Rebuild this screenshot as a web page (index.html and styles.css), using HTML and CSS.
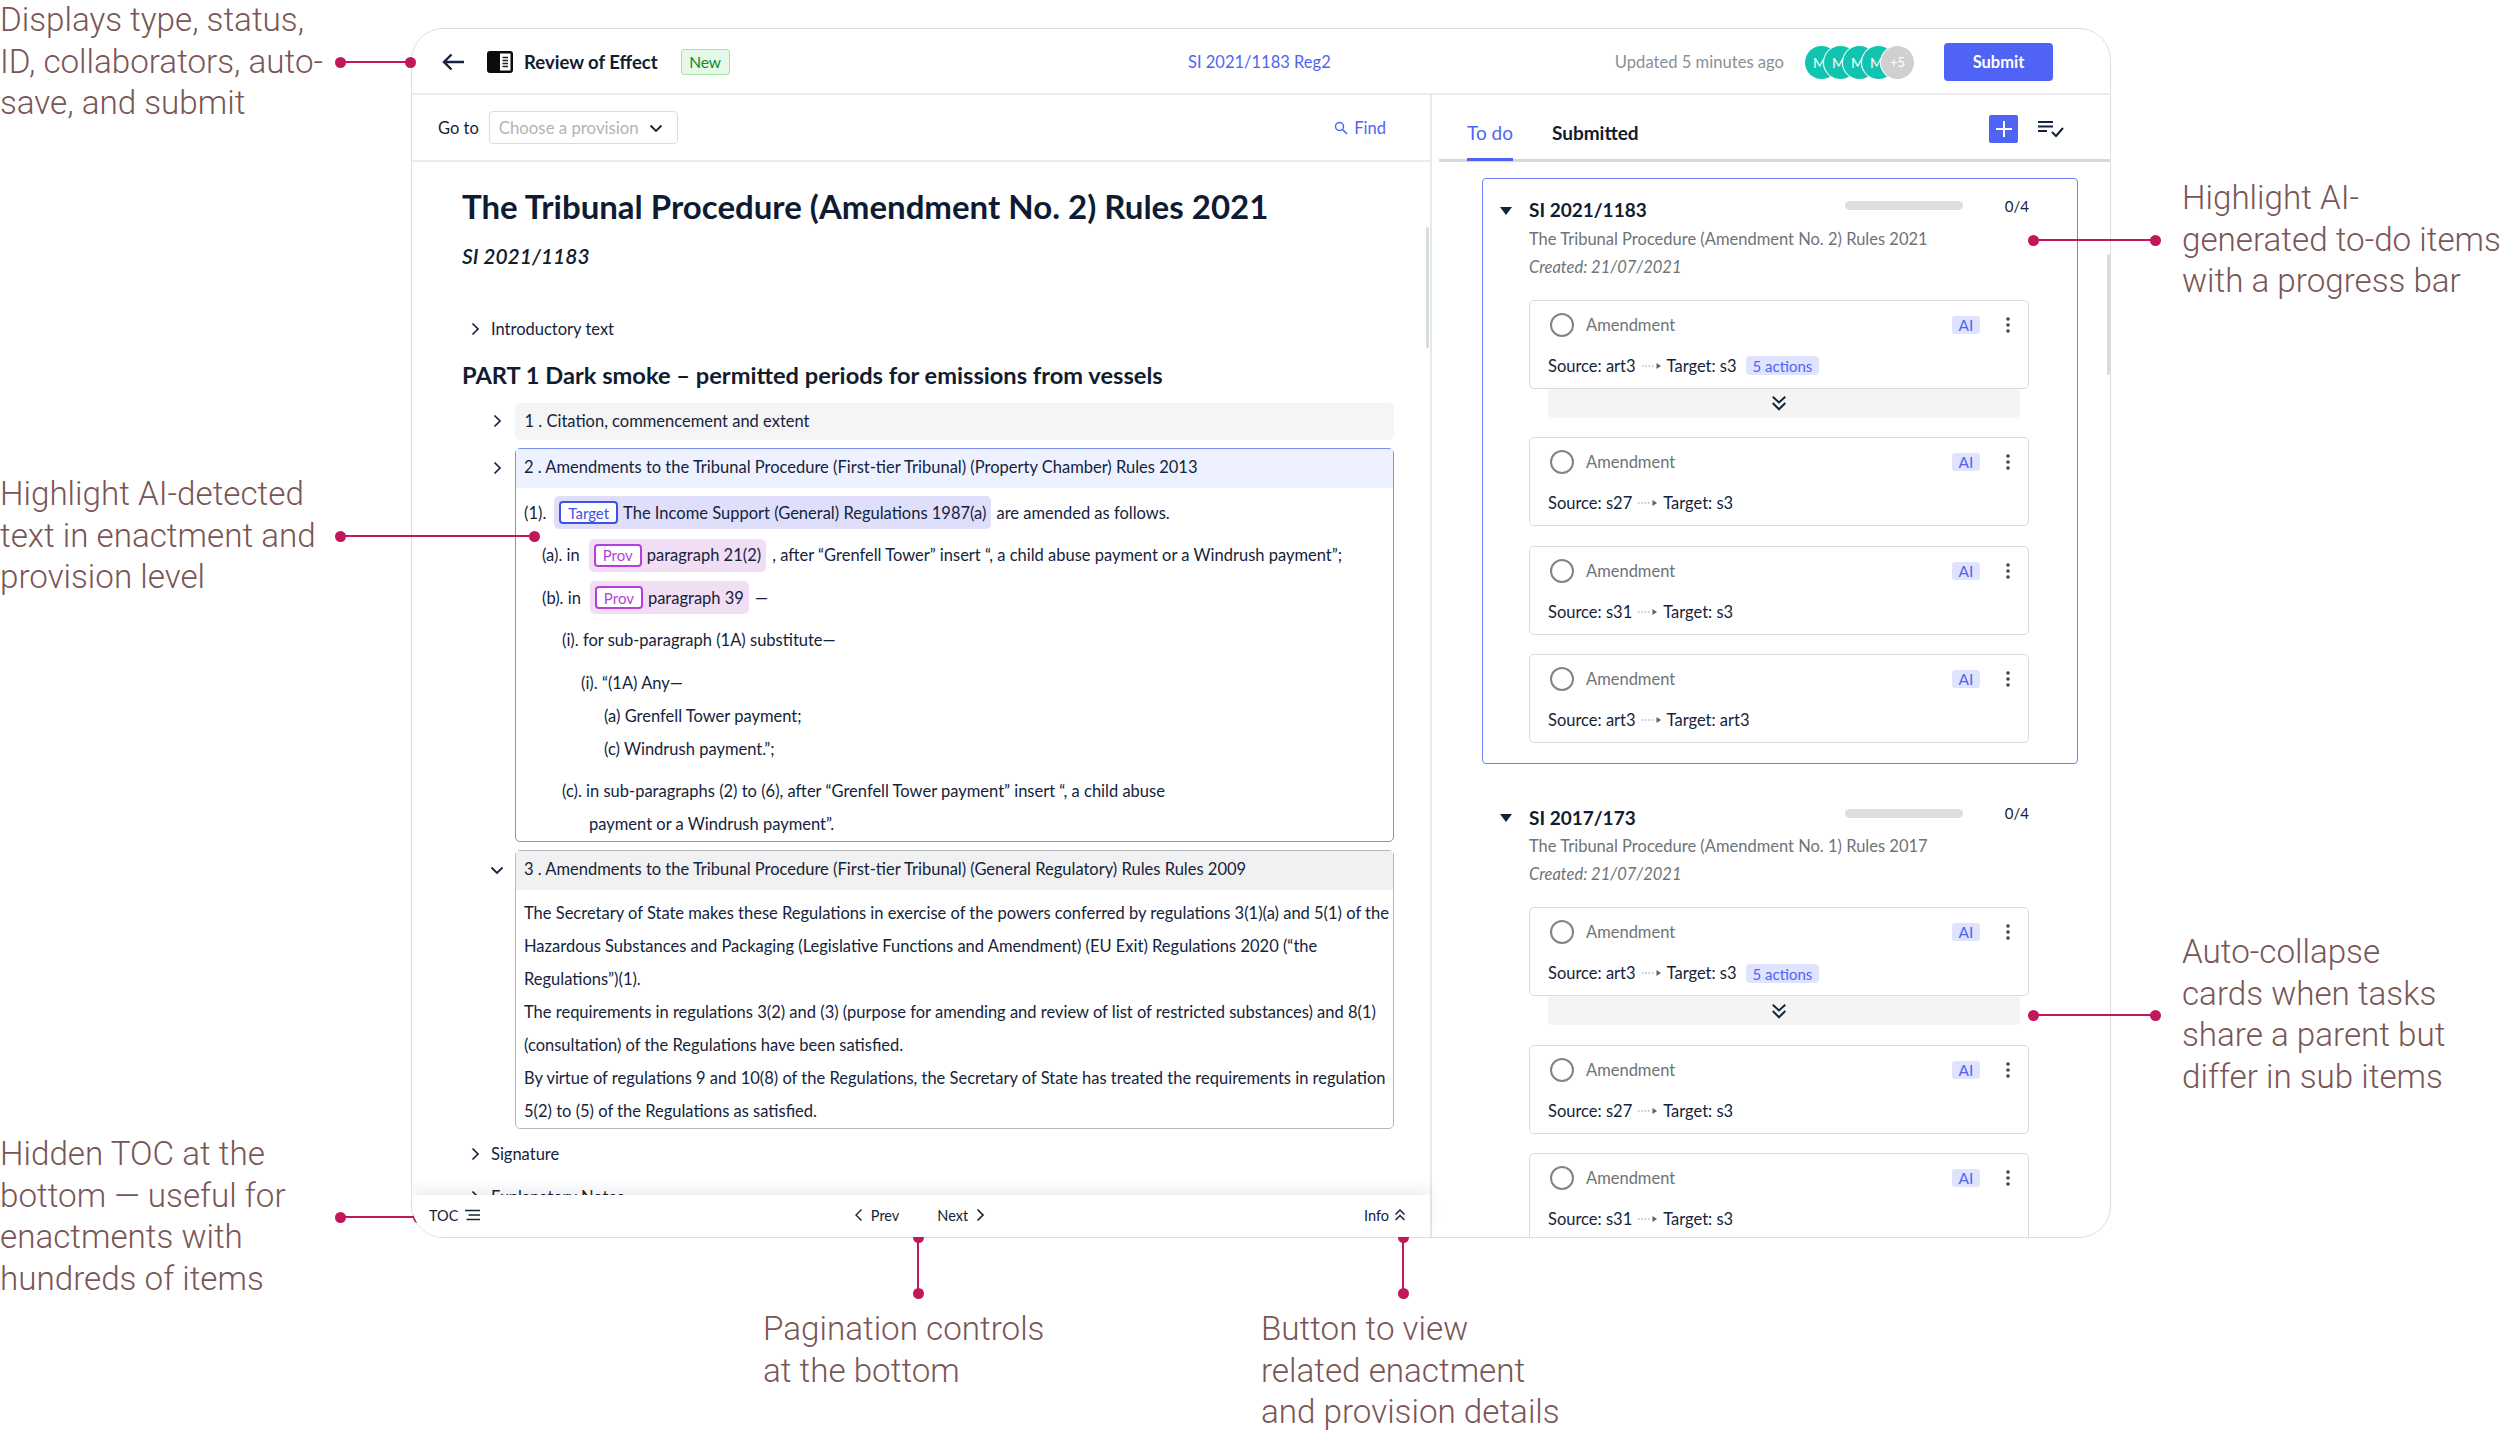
FILE: index.html
```html
<!DOCTYPE html>
<html lang="en">
<head>
  <meta charset="UTF-8" />
  <title>Review of Effect</title>
  <link rel="stylesheet" href="styles.css">
</head>
<body>
  <svg class="sprite" aria-hidden="true">
    <defs>
      <symbol id="chev-right" viewBox="0 0 10 14"><path d="M2.5 1.5 8 7l-5.5 5.5" fill="none" stroke="currentColor" stroke-width="1.7"/></symbol>
      <symbol id="chev-left" viewBox="0 0 10 14"><path d="M7.5 1.5 2 7l5.5 5.5" fill="none" stroke="currentColor" stroke-width="1.4"/></symbol>
      <symbol id="chev-down" viewBox="0 0 14 10"><path d="M1.5 2.5 7 8l5.5-5.5" fill="none" stroke="currentColor" stroke-width="1.8"/></symbol>
      <symbol id="double-down" viewBox="0 0 14 14"><path d="M1.5 1.5 7 6.5l5.5-5M1.5 7 7 12.5 12.5 7" fill="none" stroke="currentColor" stroke-width="1.7"/></symbol>
      <symbol id="double-up" viewBox="0 0 12 14"><path d="M1.5 6.5 6 2l4.500 4.500M1.500 12 6 7.500l4.500 4.500" fill="none" stroke="currentColor" stroke-width="1.500"/></symbol>
      <symbol id="more" viewBox="0 0 6 18"><circle cx="3" cy="3" r="1.800"/><circle cx="3" cy="9" r="1.800"/><circle cx="3" cy="15" r="1.800"/></symbol>
      <symbol id="flow-arrow" viewBox="0 0 22 10"><path d="M1 5h13" stroke="currentColor" stroke-width="1" stroke-dasharray="1.500 1.800" fill="none"/><path d="M15.500 2 20 5l-4.500 3z"/></symbol>
    </defs>
  </svg>

  <div class="canvas">
    <div class="app">
      <!-- Header -->
      <div class="header">
        <svg class="icon-back" viewBox="0 0 24 20"><path d="M23 10H3M10.500 2.500 3 10l7.500 7.500" fill="none" stroke="#14233c" stroke-width="2.400"/></svg>
        <svg class="icon-book" viewBox="0 0 26 22"><rect width="26" height="22" rx="3" fill="#0c0c0c"/><rect x="13" y="2.500" width="10.500" height="17" fill="#fff"/><path d="M15.500 6.500h5.500M15.500 9.500h5.500M15.500 12.500h5.500M15.500 15.500h5.500" stroke="#222" stroke-width="1.500"/></svg>
        <span class="doc-type">Review of Effect</span>
        <span class="badge-new">New</span>
        <a class="doc-id">SI 2021/1183 Reg2</a>
        <span class="updated">Updated 5 minutes ago</span>
        <div class="avatars">
          <span class="avatar">M</span>
          <span class="avatar">M</span>
          <span class="avatar">M</span>
          <span class="avatar">M</span>
          <span class="avatar more-people">+5</span>
        </div>
        <button class="submit">Submit</button>
      </div>

      <div class="panels">
        <!-- Document side -->
        <div class="doc-panel">
          <div class="toolbar">
            <span class="goto-label">Go to</span>
            <div class="goto-select">
              <span>Choose a provision</span>
              <svg class="select-chev"><use href="#chev-down"/></svg>
            </div>
            <a class="find">
              <svg class="icon-search" viewBox="0 0 14 14"><circle cx="5.500" cy="5.500" r="4" fill="none" stroke="#4f64f5" stroke-width="1.500"/><path d="m8.500 8.500 4.500 4.500" stroke="#4f64f5" stroke-width="1.600"/></svg>
              Find
            </a>
          </div>

          <div class="doc">
            <h1>The Tribunal Procedure (Amendment No. 2) Rules 2021</h1>
            <div class="doc-sub">SI 2021/1183</div>
            <div class="outline-row intro"><svg class="chev"><use href="#chev-right"/></svg>Introductory text</div>
            <h2>PART 1 Dark smoke – permitted periods for emissions from vessels</h2>

            <div class="section">
              <svg class="chev"><use href="#chev-right"/></svg>
              <div class="sec-box plain">1 . Citation, commencement and extent</div>
            </div>

            <div class="section">
              <svg class="chev chev-active"><use href="#chev-right"/></svg>
              <div class="sec-box selected">
                <div class="sec-title blue">2 . Amendments to the Tribunal Procedure (First-tier Tribunal) (Property Chamber) Rules 2013</div>
                <div class="prov-body">
                  <div class="line">(1).<span class="mark mark-target"><span class="tag tag-target">Target</span>The Income Support (General) Regulations 1987(a)</span>are amended as follows.</div>
                  <div class="line lvl-1 spaced">(a). in<span class="mark mark-prov"><span class="tag tag-prov">Prov</span>paragraph 21(2)</span>, after “Grenfell Tower” insert “, a child abuse payment or a Windrush payment”;</div>
                  <div class="line lvl-1 spaced">(b). in<span class="mark mark-prov"><span class="tag tag-prov">Prov</span>paragraph 39</span>—</div>
                  <div class="line lvl-2 spaced">(i). for sub-paragraph (1A) substitute—</div>
                  <div class="line lvl-3 spaced">(i). “(1A) Any—</div>
                  <div class="line lvl-4">(a) Grenfell Tower payment;</div>
                  <div class="line lvl-4">(c) Windrush payment.”;</div>
                  <div class="line lvl-2 spaced">(c). in sub-paragraphs (2) to (6), after “Grenfell Tower payment” insert “, a child abuse</div>
                  <div class="line lvl-5">payment or a Windrush payment”.</div>
                </div>
              </div>
            </div>

            <div class="section">
              <svg class="chev chev-open"><use href="#chev-down"/></svg>
              <div class="sec-box opened">
                <div class="sec-title grey">3 . Amendments to the Tribunal Procedure (First-tier Tribunal) (General Regulatory) Rules Rules 2009</div>
                <div class="sec-text">
                  The Secretary of State makes these Regulations in exercise of the powers conferred by regulations 3(1)(a) and 5(1) of the<br>
                  Hazardous Substances and Packaging (Legislative Functions and Amendment) (EU Exit) Regulations 2020 (“the<br>
                  Regulations”)(1).<br>
                  The requirements in regulations 3(2) and (3) (purpose for amending and review of list of restricted substances) and 8(1)<br>
                  (consultation) of the Regulations have been satisfied.<br>
                  By virtue of regulations 9 and 10(8) of the Regulations, the Secretary of State has treated the requirements in regulation<br>
                  5(2) to (5) of the Regulations as satisfied.
                </div>
              </div>
            </div>

            <div class="outline-row signature"><svg class="chev"><use href="#chev-right"/></svg>Signature</div>
            <div class="outline-row notes"><svg class="chev"><use href="#chev-right"/></svg>Explanatory Notes</div>
          </div>

          <!-- Bottom bar -->
          <div class="bottom-bar">
            <div class="toc">TOC
              <svg class="icon-toc" viewBox="0 0 16 12"><path d="M0 1.500h15M3.500 6h11.500M1.500 10.500h13.500" stroke="#14233c" stroke-width="1.700" fill="none"/></svg>
            </div>
            <div class="pager">
              <span class="pager-item"><svg class="pager-chev"><use href="#chev-left"/></svg>Prev</span>
              <span class="pager-item">Next<svg class="pager-chev"><use href="#chev-right"/></svg></span>
            </div>
            <div class="info">Info <svg class="icon-up"><use href="#double-up"/></svg></div>
          </div>
          <div class="scroll-thumb doc-thumb"></div>
        </div>

        <!-- To do side -->
        <div class="todo-panel">
          <div class="tabs">
            <span class="tab active">To do</span>
            <span class="tab">Submitted</span>
            <div class="tab-actions">
              <span class="add-btn"><svg viewBox="0 0 18 18"><path d="M9 1v16M1 9h16" stroke="#fff" stroke-width="2"/></svg></span>
              <svg class="icon-listcheck" viewBox="0 0 26 18"><path d="M0 2h15M0 6.500h15M0 11h9" stroke="#14233c" stroke-width="2"/><path d="m14 12 4 4 7-8" fill="none" stroke="#14233c" stroke-width="2"/></svg>
            </div>
          </div>

          <div class="todo-list">
            <div class="group current">
              <div class="group-head">
                <svg class="caret" viewBox="0 0 12 8"><path d="M0 0h12L6 8z"/></svg>
                <span class="group-id">SI 2021/1183</span>
                <div class="progress"></div>
                <span class="count">0/4</span>
              </div>
              <div class="group-desc">The Tribunal Procedure (Amendment No. 2) Rules 2021</div>
              <div class="group-date">Created: 21/07/2021</div>

              <div class="card-stack">
                <div>
                  <div class="card">
                    <div class="card-top"><span class="radio"></span><span class="card-type">Amendment</span><span class="ai">AI</span><svg class="more"><use href="#more"/></svg></div>
                    <div class="card-flow">Source: art3<svg class="flow"><use href="#flow-arrow"/></svg>Target: s3<span class="actions">5 actions</span></div>
                  </div>
                  <div class="expander"><svg><use href="#double-down"/></svg></div>
                </div>
                <div class="card">
                  <div class="card-top"><span class="radio"></span><span class="card-type">Amendment</span><span class="ai">AI</span><svg class="more"><use href="#more"/></svg></div>
                  <div class="card-flow">Source: s27<svg class="flow"><use href="#flow-arrow"/></svg>Target: s3</div>
                </div>
                <div class="card">
                  <div class="card-top"><span class="radio"></span><span class="card-type">Amendment</span><span class="ai">AI</span><svg class="more"><use href="#more"/></svg></div>
                  <div class="card-flow">Source: s31<svg class="flow"><use href="#flow-arrow"/></svg>Target: s3</div>
                </div>
                <div class="card">
                  <div class="card-top"><span class="radio"></span><span class="card-type">Amendment</span><span class="ai">AI</span><svg class="more"><use href="#more"/></svg></div>
                  <div class="card-flow">Source: art3<svg class="flow"><use href="#flow-arrow"/></svg>Target: art3</div>
                </div>
              </div>
            </div>

            <div class="group">
              <div class="group-head">
                <svg class="caret" viewBox="0 0 12 8"><path d="M0 0h12L6 8z"/></svg>
                <span class="group-id">SI 2017/173</span>
                <div class="progress"></div>
                <span class="count">0/4</span>
              </div>
              <div class="group-desc">The Tribunal Procedure (Amendment No. 1) Rules 2017</div>
              <div class="group-date">Created: 21/07/2021</div>

              <div class="card-stack">
                <div>
                  <div class="card">
                    <div class="card-top"><span class="radio"></span><span class="card-type">Amendment</span><span class="ai">AI</span><svg class="more"><use href="#more"/></svg></div>
                    <div class="card-flow">Source: art3<svg class="flow"><use href="#flow-arrow"/></svg>Target: s3<span class="actions">5 actions</span></div>
                  </div>
                  <div class="expander"><svg><use href="#double-down"/></svg></div>
                </div>
                <div class="card">
                  <div class="card-top"><span class="radio"></span><span class="card-type">Amendment</span><span class="ai">AI</span><svg class="more"><use href="#more"/></svg></div>
                  <div class="card-flow">Source: s27<svg class="flow"><use href="#flow-arrow"/></svg>Target: s3</div>
                </div>
                <div class="card">
                  <div class="card-top"><span class="radio"></span><span class="card-type">Amendment</span><span class="ai">AI</span><svg class="more"><use href="#more"/></svg></div>
                  <div class="card-flow">Source: s31<svg class="flow"><use href="#flow-arrow"/></svg>Target: s3</div>
                </div>
              </div>
            </div>
          </div>
          <div class="scroll-thumb todo-thumb"></div>
        </div>
      </div>
    </div>

    <!-- Annotations -->
    <p class="note note-header">Displays type, status,<br>ID, collaborators, auto-<br>save, and submit</p>
    <p class="note note-detect">Highlight AI-detected<br>text in enactment and<br>provision level</p>
    <p class="note note-toc">Hidden TOC at the<br>bottom — useful for<br>enactments with<br>hundreds of items</p>
    <p class="note note-pager">Pagination controls<br>at the bottom</p>
    <p class="note note-info">Button to view<br>related enactment<br>and provision details</p>
    <p class="note note-todo">Highlight AI-<br>generated to-do items<br>with a progress bar</p>
    <p class="note note-collapse">Auto-collapse<br>cards when tasks<br>share a parent but<br>differ in sub items</p>

    <div class="link link-h link-header"></div>
    <div class="link link-h link-detect"></div>
    <div class="link link-h link-toc"></div>
    <div class="link link-v link-pager"></div>
    <div class="link link-v link-info"></div>
    <div class="link link-h link-todo"></div>
    <div class="link link-h link-collapse"></div>
  </div>
</body>
</html>
```

FILE: styles.css
```css
* {
  box-sizing: border-box;
}

body {
  margin: 0;
  background-color: #fff;
  font-family: Lato, "Liberation Sans", sans-serif;
  color: #14233c;
}

.sprite {
  position: absolute;
  width: 0;
  height: 0;
}

.canvas {
  position: relative;
  width: 2500px;
  height: 1434px;
  padding: 28px 0 0 411px;
  overflow: hidden;
}

/* App window */
.app {
  width: 1700px;
  height: 1210px;
  border: 1px solid #dcdfe2;
  border-radius: 32px;
  background-color: #fff;
  overflow: hidden;
  display: flex;
  flex-direction: column;
}

.header {
  height: 66px;
  flex: none;
  display: flex;
  align-items: center;
  padding: 2px 57px 0 29px;
  border-bottom: 2px solid #e9ebee;
}

.icon-back {
  width: 24px;
  height: 20px;
}

.icon-book {
  width: 26px;
  height: 22px;
  margin-left: 22px;
}

.doc-type {
  margin-left: 11px;
  font-size: 18.500px;
  font-weight: 700;
  color: #111c2e;
}

.badge-new {
  margin-left: 23px;
  width: 49px;
  height: 26px;
  display: flex;
  align-items: center;
  justify-content: center;
  background-color: #e6f8e7;
  border: 1px solid #a5e3ab;
  border-radius: 3px;
  font-size: 15.500px;
  color: #0b8a2e;
}

.doc-id {
  position: absolute;
  left: 1188px;
  font-size: 16.500px;
  color: #4f64f5;
}

.updated {
  margin-left: auto;
  font-size: 16.600px;
  color: #8b8f94;
}

.avatars {
  display: flex;
  margin-left: 21px;
}

.avatar {
  width: 33px;
  height: 33px;
  margin-right: -14px;
  padding-right: 4px;
  border-radius: 50%;
  display: flex;
  align-items: center;
  justify-content: center;
  background-color: #10c4b0;
  box-shadow: 0 0 0 1px #fff;
  font-size: 14px;
  color: #fff;
}

.more-people {
  margin-right: 0;
  padding-right: 0;
  background-color: #d0d0d0;
  font-size: 13px;
}

.submit {
  width: 109px;
  height: 38px;
  margin-left: 30px;
  border: 0;
  border-radius: 4px;
  background-color: #4f64f5;
  font-family: inherit;
  font-size: 16.500px;
  font-weight: 700;
  color: #fff;
}

.panels {
  flex: 1;
  min-height: 0;
  display: flex;
}

/* Document panel */
.doc-panel {
  position: relative;
  width: 1020px;
  flex: none;
  display: flex;
  flex-direction: column;
  border-right: 2px solid #e6e9ec;
}

.toolbar {
  height: 67px;
  flex: none;
  display: flex;
  align-items: center;
  padding: 0 44px 0 26px;
  border-bottom: 2px solid #e9ebee;
}

.goto-label {
  font-size: 16.500px;
}

.goto-select {
  width: 189px;
  height: 33px;
  margin-left: 10px;
  padding: 0 9px;
  display: flex;
  align-items: center;
  justify-content: space-between;
  border: 1px solid #d8dde2;
  border-radius: 4px;
  font-size: 16.800px;
  color: #b3b3b3;
}

.select-chev {
  width: 14px;
  height: 10px;
  margin-right: 5px;
  color: #14233c;
}

.find {
  margin-left: auto;
  display: flex;
  align-items: center;
  gap: 6px;
  font-size: 16.500px;
  color: #4f64f5;
}

.icon-search {
  width: 14px;
  height: 14px;
}

.doc {
  flex: 1;
  min-height: 0;
  overflow: hidden;
  padding: 24px 0 0 50px;
}

h1 {
  margin: 0;
  font-size: 33px;
  line-height: 40px;
  font-weight: 700;
  color: #0f1b33;
}

.doc-sub {
  margin-top: 17px;
  font-size: 21px;
  line-height: 26px;
  font-style: italic;
  font-weight: 600;
  color: #111c2e;
}

h2 {
  margin: 19px 0 13px;
  font-size: 23.650px;
  line-height: 30px;
  font-weight: 700;
  color: #111c2e;
}

.outline-row {
  display: flex;
  align-items: center;
  padding-left: 8px;
  font-size: 16.500px;
  line-height: 24px;
}

.chev {
  width: 10px;
  height: 14px;
  flex: none;
  margin-right: 11px;
}

.intro {
  margin-top: 48px;
}

.signature {
  margin-top: 13px;
}

.notes {
  margin-top: 19px;
}

.section {
  display: flex;
  margin-bottom: 8px;
  padding-left: 30px;
  font-size: 16.500px;
  width: 932px;
}

.section .chev {
  margin: 11px 13px 0 0;
}

.section .chev-active {
  margin-top: 13px;
}

.section .chev-open {
  width: 14px;
  height: 10px;
  margin: 15px 11px 0 -2px;
}

.sec-box {
  flex: 1;
  border-radius: 5px;
}

.plain {
  height: 37px;
  padding: 0 9.500px;
  line-height: 36px;
  background-color: #f5f5f5;
}

.selected {
  border: 1.500px solid #7c8ff7;
}

.opened {
  border: 1.500px solid #b4b8bc;
}

.sec-title {
  height: 39px;
  padding: 0 8px;
  line-height: 37px;
}

.blue {
  background-color: #eef1ff;
}

.grey {
  background-color: #f1f1f1;
}

.prov-body {
  padding: 8px 8px 0;
}

.line {
  height: 33px;
  display: flex;
  align-items: center;
  white-space: pre;
}

.spaced {
  margin-top: 9.500px;
}

.lvl-1 {
  padding-left: 18px;
}

.lvl-2 {
  padding-left: 38px;
}

.lvl-3 {
  padding-left: 57px;
}

.lvl-4 {
  padding-left: 80px;
}

.lvl-5 {
  padding-left: 65px;
}

.mark {
  height: 33px;
  margin: 0 6px 0 9px;
  padding: 0 5px;
  display: flex;
  align-items: center;
  border-radius: 5px;
}

.mark-target {
  background-color: #dfdffb;
  margin-left: 8px;
  margin-right: 5px;
}

.mark-prov {
  background-color: #f1def5;
}

.tag {
  height: 23px;
  margin-right: 5px;
  padding: 0 7px;
  display: flex;
  align-items: center;
  border-radius: 4px;
  border: 2px solid;
  font-size: 15px;
  background-color: #fff;
}

.tag-target {
  color: #3f51e8;
}

.tag-prov {
  color: #b53fdc;
}

.sec-text {
  padding: 7.500px 0 0 8px;
  line-height: 33px;
  white-space: nowrap;
}

.bottom-bar {
  height: 42px;
  flex: none;
  position: relative;
  z-index: 2;
  display: flex;
  align-items: center;
  justify-content: space-between;
  padding: 0 24px 2px 17px;
  background-color: #fff;
  box-shadow: 0 -6px 14px rgba(0, 0, 0, 0.07);
  font-size: 14.500px;
}

.toc,
.info,
.pager,
.pager-item {
  display: flex;
  align-items: center;
}

.toc {
  width: 120px;
  gap: 7px;
}

.icon-toc {
  width: 16px;
  height: 12px;
}

.pager {
  gap: 38px;
  padding-left: 4px;
}

.pager-item {
  gap: 7px;
}

.pager-chev {
  width: 10px;
  height: 14px;
}

.info {
  width: 120px;
  justify-content: flex-end;
  gap: 5px;
}

.icon-up {
  width: 12px;
  height: 14px;
}

.scroll-thumb {
  position: absolute;
  width: 3px;
  border-radius: 2px;
  background-color: #d5dde0;
}

.doc-thumb {
  top: 132px;
  right: 1px;
  height: 121px;
}

.todo-thumb {
  top: 159px;
  right: 0;
  height: 121px;
}

/* To do panel */
.todo-panel {
  flex: 1;
  position: relative;
  min-width: 0;
  overflow: hidden;
}

.tabs {
  height: 67px;
  margin-left: 7px;
  padding: 0 46px 0 28px;
  display: flex;
  align-items: center;
  gap: 39px;
  border-bottom: 3px solid #d5d9dc;
}

.tab {
  height: 67px;
  padding-top: 27px;
  font-size: 19px;
  font-weight: 700;
  color: #111c2e;
  line-height: 24px;
}

.tab.active {
  border-bottom: 3px solid #4f64f5;
  font-weight: 400;
  color: #4f64f5;
}

.tab-actions {
  margin-left: auto;
  margin-top: 4px;
  display: flex;
  align-items: center;
  gap: 20px;
}

.add-btn {
  width: 29px;
  height: 28px;
  display: flex;
  align-items: center;
  justify-content: center;
  border-radius: 2px;
  background-color: #4f64f5;
}

.add-btn svg {
  width: 18px;
  height: 18px;
}

.icon-listcheck {
  width: 26px;
  height: 18px;
}

.todo-list {
  padding: 16px 0 0 50px;
}

.group {
  width: 596px;
  margin-bottom: 21.500px;
  padding: 16.500px 48px 20px 46px;
  border: 1.500px solid transparent;
  border-radius: 4px;
}

.current {
  border-color: #6f82f7;
}

.group-head {
  display: flex;
  height: 28px;
  position: relative;
  align-items: center;
}

.caret {
  position: absolute;
  left: -29px;
  top: 11px;
  width: 12px;
  height: 8px;
  fill: #14233c;
}

.group-id {
  font-size: 19px;
  font-weight: 700;
  color: #111c2e;
}

.progress {
  width: 118px;
  height: 9px;
  margin: -8px 0 0 auto;
  border-radius: 5px;
  background-color: #dedede;
}

.count {
  width: 66px;
  margin-top: -8px;
  text-align: right;
  font-size: 15px;
}

.group-desc {
  margin-top: 3px;
  font-size: 16.500px;
  line-height: 24px;
  color: #6e7377;
}

.group-date {
  margin-top: 4px;
  font-size: 16.500px;
  line-height: 24px;
  font-style: italic;
  color: #6e7377;
}

.card-stack {
  margin-top: 21px;
  display: flex;
  flex-direction: column;
  gap: 19.500px;
}

.card {
  height: 89px;
  padding: 11px 18px 0;
  border: 1.500px solid #d5dde0;
  border-radius: 5px;
  background-color: #fff;
}

.card-top {
  height: 26px;
  display: flex;
  align-items: center;
  padding-left: 2px;
}

.radio {
  width: 24px;
  height: 24px;
  border: 2px solid #808488;
  border-radius: 50%;
}

.card-type {
  margin-left: 12px;
  font-size: 16.500px;
  color: #6e7377;
}

.ai {
  width: 28px;
  height: 18px;
  margin-left: auto;
  border-radius: 3px;
  background-color: #dfe3fd;
  text-align: center;
  line-height: 19px;
  font-size: 15.500px;
  color: #4f64f5;
}

.more {
  width: 6px;
  height: 18px;
  margin: 0 -1px 0 25px;
  fill: #3c4650;
}

.card-flow {
  height: 24px;
  margin-top: 16px;
  display: flex;
  align-items: center;
  font-size: 16.500px;
}

.flow {
  width: 22px;
  height: 10px;
  margin: 0 4px 0 5px;
  fill: #5a6470;
  color: #8a939c;
}

.actions {
  height: 19px;
  margin-left: 9px;
  padding: 0 7px;
  border-radius: 4px;
  background-color: #dfe3fd;
  line-height: 20px;
  font-size: 15px;
  color: #4f64f5;
}

.expander {
  height: 29px;
  margin: 0 9.500px 0 18.500px;
  padding-right: 10px;
  display: flex;
  align-items: center;
  justify-content: center;
  border-radius: 0 0 5px 5px;
  background-color: #f4f4f4;
}

.expander svg {
  width: 16px;
  height: 16px;
}

/* Annotations */
.note {
  position: absolute;
  margin: 0;
  font-family: Roboto, sans-serif;
  font-weight: 300;
  font-size: 33.200px;
  line-height: 41.500px;
  color: #7a5555;
  white-space: nowrap;
}

.note-header { left: 0; top: -1px; }
.note-detect { left: 0; top: 473px; }
.note-toc { left: 0; top: 1133px; }
.note-pager { left: 763px; top: 1308px; }
.note-info { left: 1261px; top: 1308px; }
.note-todo { left: 2182px; top: 177px; }
.note-collapse { left: 2182px; top: 931px; }

.link {
  position: absolute;
  background-color: #c2185b;
}

.link::before,
.link::after {
  content: "";
  position: absolute;
  width: 11px;
  height: 11px;
  border-radius: 50%;
  background-color: #c2185b;
}

.link-h {
  height: 2px;
}

.link-h::before {
  left: -5px;
  top: -4.500px;
}

.link-h::after {
  right: -5px;
  top: -4.500px;
}

.link-v {
  width: 2px;
}

.link-v::before {
  top: -5px;
  left: -4.500px;
}

.link-v::after {
  bottom: -5px;
  left: -4.500px;
}

.link-header { left: 340px; top: 61px; width: 71px; }
.link-detect { left: 340px; top: 535px; width: 195px; }
.link-toc { left: 340px; top: 1216px; width: 79px; }
.link-pager { left: 917px; top: 1237px; height: 57px; }
.link-info { left: 1402px; top: 1237px; height: 57px; }
.link-todo { left: 2033px; top: 239px; width: 123px; }
.link-collapse { left: 2033px; top: 1014px; width: 123px; }
```
